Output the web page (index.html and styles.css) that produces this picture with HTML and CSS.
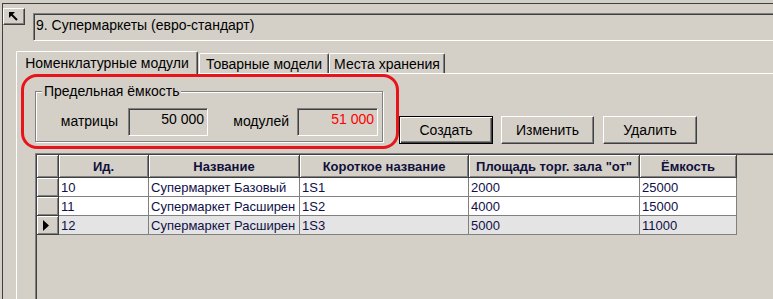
FILE: index.html
```html
<!DOCTYPE html>
<html>

<head>
    <meta charset="UTF-8" />
    <title>Супермаркеты</title>
    <link rel="stylesheet" href="styles.css">
</head>
<body>
    <div class="window">
        <!-- верхняя строка: кнопка и заголовок -->
        <div class="topbar">
            <button class="back-btn">
                <svg width="9" height="9" viewBox="0 0 9 9">
                    <polygon points="0,0 6,0 0,6" fill="#000"/>
                    <line x1="1" y1="1" x2="8" y2="8" stroke="#000" stroke-width="2"/>
                </svg>
            </button>
            <div class="titlebox">9. Супермаркеты (евро-стандарт)</div>
        </div>

        <div class="tabs">
            <div class="tab-row">
                <div class="tab tab-active">Номенклатурные модули</div>
                <div class="tab tab-2">Товарные модели</div>
                <div class="tab tab-3">Места хранения</div>
            </div>

            <div class="panel">
                <div class="controls">
                    <div class="group">
                        <span class="group-title">Предельная ёмкость</span>
                        <span class="lbl lbl-1">матрицы</span>
                        <div class="field field-1">50 000</div>
                        <span class="lbl lbl-2">модулей</span>
                        <div class="field field-2 red">51 000</div>
                    </div>
                    <div class="buttons">
                        <button class="btn btn-default">Создать</button>
                        <button class="btn btn-edit">Изменить</button>
                        <button class="btn btn-del">Удалить</button>
                    </div>
                </div>

                <!-- красная рамка-пометка -->
                <div class="mark"></div>

                <div class="grid">
                    <table>
                        <thead>
                            <tr>
                                <th class="c-ind"></th>
                                <th class="c-id">Ид.</th>
                                <th class="c-name">Название</th>
                                <th class="c-short">Короткое название</th>
                                <th class="c-area">Площадь торг. зала "от"</th>
                                <th class="c-cap">Ёмкость</th>
                            </tr>
                        </thead>
                        <tbody>
                            <tr>
                                <td class="ind"></td>
                                <td>10</td>
                                <td>Супермаркет Базовый</td>
                                <td>1S1</td>
                                <td>2000</td>
                                <td>25000</td>
                            </tr>
                            <tr>
                                <td class="ind"></td>
                                <td>11</td>
                                <td>Супермаркет Расширен</td>
                                <td>1S2</td>
                                <td>4000</td>
                                <td>15000</td>
                            </tr>
                            <tr class="current">
                                <td class="ind">
                                    <svg width="6" height="11" viewBox="0 0 6 11">
                                        <polygon points="0,0 6,5.5 0,11" fill="#000"/>
                                    </svg>
                                </td>
                                <td>12</td>
                                <td>Супермаркет Расширен</td>
                                <td>1S3</td>
                                <td>5000</td>
                                <td>11000</td>
                            </tr>
                        </tbody>
                    </table>
                </div>
            </div>
        </div>
    </div>
</body>

</html>
```

FILE: styles.css
```css
*{
    margin: 0;
    padding: 0;
    box-sizing: border-box;
}

body{
    width: 773px;
    height: 299px;
    overflow: hidden;
    background-color: #d4d0c8;
    font-family: "Liberation Sans", Arial, sans-serif;
    font-size: 14px;
    color: #000;
}

.window{
    margin: 3px 0 0 2px;
    height: 296px;
    overflow: hidden;
    border-left: 1px solid #404040;
    border-top: 1px solid #404040;
}

/* верхняя строка */
.topbar{
    display: flex;
    align-items: flex-start;
    padding-top: 4px;
}

.back-btn{
    width: 22px;
    height: 17px;
    margin-right: 8px;
    background-color: #d4d0c8;
    border: 1px solid;
    border-color: #fff #404040 #404040 #fff;
    box-shadow: inset -1px -1px 0 #808080;
    display: flex;
    align-items: center;
    justify-content: center;
    padding: 0 1px 1px 0;
}

.titlebox{
    flex: 1;
    margin: 5px -10px 0 0;
    height: 28px;
    padding-left: 2px;
    line-height: 23px;
    border: 1px solid;
    border-color: #808080 #fff #fff #808080;
    box-shadow: inset 1px 1px 0 #404040;
    white-space: nowrap;
}

/* вкладки */
.tabs{
    margin: 10px 0 0 13px;
}

.tab-row{
    display: flex;
    align-items: flex-end;
    height: 22px;
}

.tab{
    height: 20px;
    line-height: 20px;
    text-align: center;
    white-space: nowrap;
    background-color: #d4d0c8;
    border-top: 1px solid #fff;
    border-left: 1px solid #fff;
    border-right: 1px solid #404040;
    box-shadow: inset -1px 0 0 #808080;
    border-radius: 2px 2px 0 0;
}

.tab-active{
    width: 182px;
    height: 23px;
    line-height: 22px;
    margin-bottom: -1px;
    position: relative;
    z-index: 1;
}

.tab-2{
    width: 130px;
    margin-left: 1px;
}

.tab-3{
    width: 116px;
}

.panel{
    position: relative;
    height: 226px;
    border-top: 1px solid #fff;
    border-left: 1px solid #fff;
}

.controls{
    display: flex;
    align-items: flex-start;
    height: 79px;
}

/* рамка группы */
.group{
    position: relative;
    display: flex;
    align-items: flex-start;
    width: 348px;
    height: 51px;
    margin: 17px 0 0 18px;
    padding-top: 16px;
    border: 1px solid #808080;
    box-shadow: inset 1px 1px 0 #fff, 1px 1px 0 #fff;
}

.group-title{
    position: absolute;
    top: -9px;
    left: 6px;
    padding: 0 2px;
    line-height: 16px;
    background-color: #d4d0c8;
}

.lbl{
    height: 28px;
    line-height: 26px;
    text-align: right;
}

.lbl-1{
    width: 92px;
    padding-right: 10px;
}

.lbl-2{
    width: 89px;
    padding-right: 8px;
}

.field{
    height: 28px;
    line-height: 21px;
    padding-right: 3px;
    text-align: right;
    border: 1px solid;
    border-color: #808080 #fff #fff #808080;
    box-shadow: inset 1px 1px 0 #404040;
}

.field-1{
    width: 80px;
}

.field-2{
    width: 81px;
}

.red{
    color: #ff0000;
}

/* кнопки */
.buttons{
    display: flex;
    margin: 42px 0 0 16px;
}

.btn{
    height: 28px;
    font-family: "Liberation Sans", Arial, sans-serif;
    font-size: 14px;
    background-color: #d4d0c8;
    border: 1px solid;
    border-color: #fff #404040 #404040 #fff;
    box-shadow: inset -1px -1px 0 #808080;
}

.btn-default{
    width: 94px;
    border-color: #000;
    box-shadow: inset 1px 1px 0 #fff, inset -1px -1px 0 #404040, inset -2px -2px 0 #808080;
}

.btn-edit{
    width: 93px;
    margin-left: 8px;
}

.btn-del{
    width: 94px;
    margin-left: 9px;
}

/* пометка красным */
.mark{
    position: absolute;
    left: 4px;
    top: 0;
    width: 378px;
    height: 75px;
    border: 3px solid #e8141c;
    border-radius: 16px;
}

/* таблица */
.grid{
    margin: 0 -10px 0 18px;
    height: 146px;
    padding: 1px 0 0 1px;
    border-top: 1px solid #808080;
    border-left: 1px solid #808080;
    box-shadow: inset 1px 1px 0 #404040;
}

table{
    border-collapse: separate;
    border-spacing: 0;
    table-layout: fixed;
    width: 700px;
    font-size: 13px;
}

th{
    height: 23px;
    font-weight: bold;
    color: #10103a;
    text-align: center;
    background-color: #d4d0c8;
    border-right: 1px solid #404040;
    border-bottom: 1px solid #404040;
    box-shadow: inset 1px 1px 0 #fff, inset -1px -1px 0 #808080;
    white-space: nowrap;
}

.c-ind{ width: 22px; }
.c-id{ width: 90px; }
.c-name{ width: 151px; }
.c-short{ width: 169px; }
.c-area{ width: 171px; }
.c-cap{ width: 97px; }

td{
    height: 19px;
    padding: 0 0 0 2px;
    color: #101048;
    background-color: #fff;
    border-right: 1px solid #808080;
    border-bottom: 1px solid #808080;
    white-space: nowrap;
    overflow: hidden;
}

td.ind{
    padding: 0;
    background-color: #d4d0c8;
    border-right: 1px solid #404040;
    border-bottom: 1px solid #404040;
    box-shadow: inset 1px 1px 0 #fff, inset -1px -1px 0 #808080;
    text-align: center;
    vertical-align: middle;
}

td.ind svg{
    display: block;
    margin-left: 6px;
}

.current td{
    background-color: #e4e4e4;
}

.current td.ind{
    background-color: #d4d0c8;
}
```
